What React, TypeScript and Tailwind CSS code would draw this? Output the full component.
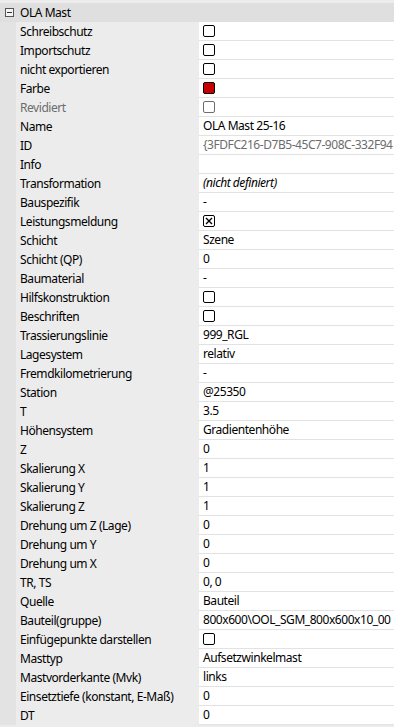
import React from 'react';

type Kind = 'text' | 'check' | 'checked' | 'color' | 'italic' | 'muted';

interface Row {
  label: string;
  value?: string;
  kind?: Kind;
  disabled?: boolean;
}

const rows: Row[] = [
  { label: 'Schreibschutz', kind: 'check' },
  { label: 'Importschutz', kind: 'check' },
  { label: 'nicht exportieren', kind: 'check' },
  { label: 'Farbe', kind: 'color' },
  { label: 'Revidiert', kind: 'check', disabled: true },
  { label: 'Name', value: 'OLA Mast 25-16' },
  { label: 'ID', value: '{3FDFC216-D7B5-45C7-908C-332F94', kind: 'muted' },
  { label: 'Info', value: '' },
  { label: 'Transformation', value: '(nicht definiert)', kind: 'italic' },
  { label: 'Bauspezifik', value: '-' },
  { label: 'Leistungsmeldung', kind: 'checked' },
  { label: 'Schicht', value: 'Szene' },
  { label: 'Schicht (QP)', value: '0' },
  { label: 'Baumaterial', value: '-' },
  { label: 'Hilfskonstruktion', kind: 'check' },
  { label: 'Beschriften', kind: 'check' },
  { label: 'Trassierungslinie', value: '999_RGL' },
  { label: 'Lagesystem', value: 'relativ' },
  { label: 'Fremdkilometrierung', value: '-' },
  { label: 'Station', value: '@25350' },
  { label: 'T', value: '3.5' },
  { label: 'Höhensystem', value: 'Gradientenhöhe' },
  { label: 'Z', value: '0' },
  { label: 'Skalierung X', value: '1' },
  { label: 'Skalierung Y', value: '1' },
  { label: 'Skalierung Z', value: '1' },
  { label: 'Drehung um Z (Lage)', value: '0' },
  { label: 'Drehung um Y', value: '0' },
  { label: 'Drehung um X', value: '0' },
  { label: 'TR, TS', value: '0, 0' },
  { label: 'Quelle', value: 'Bauteil' },
  { label: 'Bauteil(gruppe)', value: '800x600\\OOL_SGM_800x600x10_00' },
  { label: 'Einfügepunkte darstellen', kind: 'check' },
  { label: 'Masttyp', value: 'Aufsetzwinkelmast' },
  { label: 'Mastvorderkante (Mvk)', value: 'links' },
  { label: 'Einsetztiefe (konstant, E-Maß)', value: '0' },
  { label: 'DT', value: '0' },
];

const CheckBox: React.FC<{ disabled?: boolean; checked?: boolean }> = ({ disabled, checked }) => (
  <div
    className={`w-3 h-3 rounded-[2px] border bg-white flex items-center justify-center ${
      disabled ? 'border-[#6d6d6d]' : 'border-black'
    }`}
  >
    {checked && (
      <svg width="8" height="8" viewBox="0 0 8 8">
        <path d="M1 1 L7 7 M7 1 L1 7" stroke="#000" strokeWidth="1.4" />
      </svg>
    )}
  </div>
);

const ValueCell: React.FC<{ row: Row }> = ({ row }) => {
  switch (row.kind) {
    case 'check':
      return <CheckBox disabled={row.disabled} />;
    case 'checked':
      return <CheckBox checked />;
    case 'color':
      return <div className="w-3 h-3 rounded-[2px] border border-black bg-[#c80000]" />;
    case 'italic':
      return <span className="italic text-black">{row.value}</span>;
    case 'muted':
      return <span className="text-[#6d6d6d] whitespace-nowrap">{row.value}</span>;
    default:
      return <span className="text-black whitespace-nowrap">{row.value}</span>;
  }
};

export default function App() {
  return (
    <div
      className="w-[394px] h-[727px] overflow-hidden bg-[#ececec] text-[12px] leading-none tracking-[-0.45px] select-none"
      style={{ fontFamily: '"Noto Sans", "Open Sans", sans-serif' }}
    >
      <div className="h-[3px]" />
      {/* Category header */}
      <div className="h-[19px] bg-[#dfdfdf] flex items-center">
        <div className="w-4 flex items-center justify-center pl-[3px]">
          <div className="w-[9px] h-[9px] border border-[#555] flex items-center justify-center bg-[#f4f4f4]">
            <div className="w-[5px] h-px bg-[#333]" />
          </div>
        </div>
        <span className="pl-1 text-black">OLA Mast</span>
      </div>

      {/* Property rows */}
      <div className="flex">
        <div className="w-4 bg-[#e3e3e3] shrink-0" />
        <div className="flex-1">
          {rows.map((row) => (
            <div key={row.label} className="flex h-[19px]">
              <div
                className={`w-[183px] shrink-0 flex items-center pl-1 whitespace-nowrap ${
                  row.disabled ? 'text-[#6d6d6d]' : 'text-black'
                }`}
              >
                {row.label}
              </div>
              <div className="flex-1 bg-white border-b border-[#e2e2e2] flex items-center pl-1 overflow-hidden">
                <ValueCell row={row} />
              </div>
            </div>
          ))}
        </div>
      </div>
    </div>
  );
}
